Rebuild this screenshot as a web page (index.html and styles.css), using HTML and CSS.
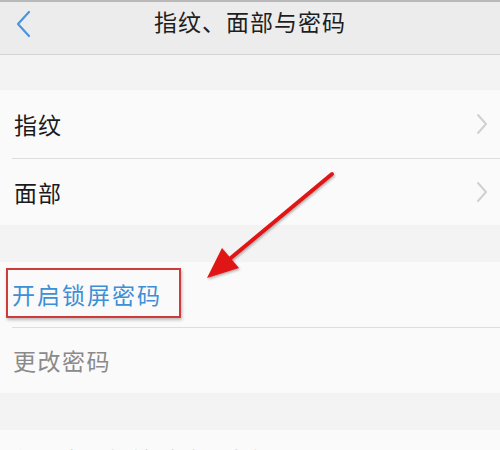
FILE: index.html
```html
<!DOCTYPE html>
<html lang="zh-CN">
<head>
<meta charset="utf-8">
<link rel="stylesheet" href="styles.css">
</head>
<body>
<div class="screen">
  <header class="nav">
    <svg class="back" width="18" height="28" viewBox="0 0 18 28"><path d="M14 2 L3 14 L14 26" fill="none" stroke="#4a94e0" stroke-width="2.2" stroke-linecap="round" stroke-linejoin="round"/></svg>
    <div class="title">指纹、面部与密码</div>
  </header>
  <div class="gap g1"></div>
  <div class="group">
    <div class="row r1"><span class="label">指纹</span><svg class="chev" width="12" height="22" viewBox="0 0 12 22"><path d="M2 2 L10 11 L2 20" fill="none" stroke="#d0d0d0" stroke-width="2" stroke-linecap="round" stroke-linejoin="round"/></svg></div>
    <div class="row r2"><span class="label">面部</span><svg class="chev" width="12" height="22" viewBox="0 0 12 22"><path d="M2 2 L10 11 L2 20" fill="none" stroke="#d0d0d0" stroke-width="2" stroke-linecap="round" stroke-linejoin="round"/></svg></div>
  </div>
  <div class="gap g2"></div>
  <div class="group">
    <div class="row r3"><span class="label blue">开启锁屏密码</span><div class="highlight"></div></div>
    <div class="row r4"><span class="label gray">更改密码</span></div>
  </div>
  <div class="gap g3"></div>
  <div class="group">
    <div class="row r5"><span class="label gray">使用密码解锁时验证身份</span></div>
  </div>
  <svg class="arrow" width="500" height="450" viewBox="0 0 500 450">
    <defs>
      <filter id="sh" x="-20%" y="-20%" width="140%" height="140%"><feDropShadow dx="1" dy="1.5" stdDeviation="1.2" flood-color="#000" flood-opacity="0.3"/></filter>
    </defs>
    <g filter="url(#sh)">
      <line x1="332" y1="174" x2="226" y2="262" stroke="#e01515" stroke-width="4" stroke-linecap="round"/>
      <polygon points="207,278 222,248 239,268" fill="#e01515"/>
    </g>
  </svg>
</div>
</body>
</html>
```
FILE: styles.css
```css
html, body {
  margin: 0;
  padding: 0;
  background: #f3f3f3;
}
.screen {
  position: relative;
  width: 500px;
  height: 450px;
  overflow: hidden;
  font-family: "Noto Sans CJK SC", "Noto Sans", sans-serif;
  background: #f3f3f3;
}
.nav {
  height: 52px;
  border-top: 2px solid #b9b9b9;
  border-bottom: 1px solid #d4d4d4;
  background: #ececec;
  display: flex;
  align-items: center;
  justify-content: center;
  position: relative;
}
.back {
  position: absolute;
  left: 15px;
  top: 8px;
}
.title {
  font-size: 23px;
  color: #1e1e1e;
  letter-spacing: 1px;
  margin-top: -14px;
}
.gap { background: #f3f3f3; }
.g1 { height: 35px; }
.g2 { height: 37px; }
.g3 { height: 37px; }
.group {
  background: #fafafa;
  padding-left: 12px;
}
.row {
  display: flex;
  align-items: center;
  justify-content: space-between;
  padding: 0 12px 0 2px;
  position: relative;
}
.row + .row { border-top: 1px solid #dedede; }
.r1 { height: 68px; }
.r2 { height: 66px; }
.r3 { height: 65px; padding-left: 0; }
.r4 { height: 65px; padding-left: 1px; }
.r5 { height: 40px; align-items: flex-start; padding-top: 17px; }
.label {
  font-size: 23px;
  color: #1a1a1a;
  letter-spacing: 1px;
  line-height: 1;
}
.blue { color: #3d8fd6; letter-spacing: 2px; }
.gray { color: #8a8a8a; letter-spacing: 1.5px; }
.r5 .label { color: #c8c8c8; font-size: 22px; }
.highlight {
  position: absolute;
  left: -6px;
  top: 6px;
  width: 171px;
  height: 46px;
  border: 2px solid #cf3a3a;
  box-shadow: 1px 2px 3px rgba(0,0,0,0.25);
}
.arrow {
  position: absolute;
  left: 0;
  top: 0;
  pointer-events: none;
}
```
